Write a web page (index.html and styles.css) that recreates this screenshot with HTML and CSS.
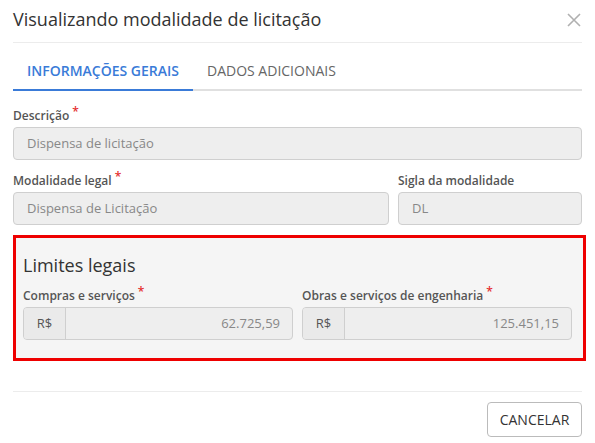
FILE: index.html
```html
<!DOCTYPE html>
<html lang="pt-BR">
<head>
<meta charset="utf-8">
<title>Visualizando modalidade de licitação</title>
<link rel="stylesheet" href="styles.css">
</head>
<body>
<div class="modal">
  <div class="modal-header">
    <h1 class="modal-title">Visualizando modalidade de licitação</h1>
    <button class="close" aria-label="Fechar">
      <svg width="14" height="14" viewBox="0 0 14 14"><path d="M1 1 L13 13 M13 1 L1 13" stroke="#b0b0b0" stroke-width="1.6" fill="none"/></svg>
    </button>
  </div>
  <div class="tabs">
    <div class="tab active">INFORMAÇÕES GERAIS</div>
    <div class="tab">DADOS ADICIONAIS</div>
  </div>
  <div class="form">
    <div class="field">
      <label class="label">Descrição<span class="req">*</span></label>
      <div class="input">Dispensa de licitação</div>
    </div>
    <div class="row">
      <div class="field">
        <label class="label">Modalidade legal<span class="req">*</span></label>
        <div class="input">Dispensa de Licitação</div>
      </div>
      <div class="field">
        <label class="label">Sigla da modalidade</label>
        <div class="input">DL</div>
      </div>
    </div>
    <div class="limits">
      <h2 class="limits-title">Limites legais</h2>
      <div class="limits-row">
        <div class="field">
          <label class="label">Compras e serviços<span class="req">*</span></label>
          <div class="group">
            <span class="addon">R$</span>
            <span class="value">62.725,59</span>
          </div>
        </div>
        <div class="field">
          <label class="label">Obras e serviços de engenharia<span class="req">*</span></label>
          <div class="group">
            <span class="addon">R$</span>
            <span class="value">125.451,15</span>
          </div>
        </div>
      </div>
    </div>
  </div>
  <div class="modal-footer">
    <button class="btn">CANCELAR</button>
  </div>
</div>
</body>
</html>
```

FILE: styles.css
```css
* { box-sizing: border-box; }
html, body { margin: 0; padding: 0; background: #fff; }
body { font-family: "Open Sans", "Noto Sans", sans-serif; color: #333; }

.modal { width: 595px; padding: 0 13px; }

.modal-header {
  display: flex;
  align-items: flex-start;
  justify-content: space-between;
  height: 43px;
  padding-top: 7px;
  border-bottom: 1px solid #ececec;
}
.modal-title {
  margin: 0;
  font-size: 18px;
  line-height: 24px;
  font-weight: 400;
  color: #333;
}
.close {
  border: 0;
  background: none;
  padding: 0;
  margin: 6px 1px 0 0;
  width: 14px;
  height: 14px;
  display: flex;
}

.tabs {
  display: flex;
  padding-top: 8px;
  border-bottom: 2px solid #e0e0e0;
}
.tab {
  font-size: 14px;
  line-height: 20px;
  padding: 10px 14px 8px;
  color: #666;
  border-bottom: 2px solid transparent;
  margin-bottom: -2px;
}
.tab.active {
  color: #3a7bd8;
  font-weight: 600;
  border-bottom-color: #3a7bd8;
}

.form { padding-top: 17px; }
.field { display: flex; flex-direction: column; min-width: 0; }
.label {
  font-size: 12px;
  line-height: 16px;
  font-weight: 600;
  color: #555;
  margin-bottom: 3px;
}
.req {
  color: #e53030;
  font-size: 12px;
  position: relative;
  top: -4px;
  margin-left: 3px;
}
.input {
  height: 33px;
  border: 1px solid #cfcfcf;
  border-radius: 4px;
  background: #eeeeee;
  color: #888;
  font-size: 13px;
  line-height: 31px;
  padding: 0 13px;
}
.row {
  display: grid;
  grid-template-columns: 376px 1fr;
  column-gap: 9px;
  margin-top: 13px;
}

.limits {
  margin-top: 10px;
  margin-right: -4px;
  border: 3px solid #ee0000;
  background: #f5f5f5;
  padding: 15px 11px 18px 7px;
}
.limits-title {
  margin: 0 0 11px;
  font-size: 18px;
  line-height: 24px;
  font-weight: 400;
  color: #333;
}
.limits-row {
  display: grid;
  grid-template-columns: 1fr 1fr;
  column-gap: 9px;
}
.group {
  display: flex;
  height: 33px;
  border: 1px solid #cfcfcf;
  border-radius: 4px;
  background: #eeeeee;
  font-size: 13px;
  line-height: 31px;
  overflow: hidden;
}
.addon {
  width: 42px;
  flex: none;
  text-align: center;
  color: #555;
  background: #eaeaea;
  border-right: 1px solid #cfcfcf;
}
.value {
  flex: 1;
  text-align: right;
  color: #888;
  padding-right: 12px;
}

.modal-footer {
  margin-top: 30px;
  border-top: 1px solid #ececec;
  padding-top: 10px;
  display: flex;
  justify-content: flex-end;
}
.btn {
  font-family: "Open Sans", "Noto Sans", sans-serif;
  font-size: 14px;
  color: #333;
  background: #fff;
  border: 1px solid #bbb;
  border-radius: 4px;
  height: 35px;
  width: 95px;
  padding: 0;
}
```
